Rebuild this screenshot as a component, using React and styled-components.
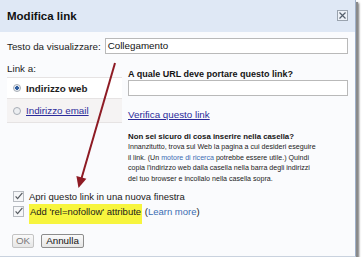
import React from "react";
import styled, { createGlobalStyle } from "styled-components";

const Global = createGlobalStyle`
  html, body {
    margin: 0;
    padding: 0;
    background: #ffffff;
  }
  body {
    font-family: "Liberation Sans", Arial, sans-serif;
    color: #1d1d1d;
  }
`;

const Dialog = styled.div`
  position: relative;
  width: 355px;
  height: 256px;
  background: #fafbfd;
  border-right: 1px solid #9fb0c9;
  border-bottom: 1px solid #c9d2de;
  box-shadow: 2px 2px 0 #8a8a8a, 3px 3px 2px rgba(0, 0, 0, 0.55);
  display: flex;
  flex-direction: column;
`;

const TitleBar = styled.div`
  height: 32px;
  flex: none;
  background: #dfe8f5;
  display: flex;
  align-items: center;
  justify-content: space-between;
  padding: 0 7px;
  box-sizing: border-box;
`;

const Title = styled.h1`
  margin: 0;
  font-size: 11.5px;
  font-weight: bold;
  color: #111;
`;

const CloseBox = styled.div`
  width: 11px;
  height: 11px;
  margin-top: -1px;
  box-sizing: border-box;
  border: 1px solid #9aa3ae;
  background: #eef2f8;
  display: flex;
  align-items: center;
  justify-content: center;
`;

const Body = styled.div`
  padding: 0 7px;
  display: flex;
  flex-direction: column;
`;

const TextRow = styled.div`
  margin-top: 6px;
  display: flex;
  align-items: center;
  gap: 4px;
`;

const Label = styled.label`
  font-size: 9.8px;
  line-height: 13px;
  color: #222;
  white-space: nowrap;
`;

const Input = styled.div`
  flex: 1;
  height: 16px;
  box-sizing: border-box;
  border: 1px solid #b9b9b9;
  background: #fff;
  font-size: 9.8px;
  line-height: 14px;
  padding-left: 2px;
  color: #111;
`;

const Columns = styled.div`
  margin-top: 8px;
  display: flex;
  gap: 6px;
  align-items: flex-start;
`;

const LeftCol = styled.div`
  width: 115px;
  flex: none;
  display: flex;
  flex-direction: column;
`;

const Panel = styled.div`
  margin-top: 2px;
  background: #f5f3f3;
  border-top: 1px solid #e6e3e3;
  border-bottom: 1px solid #e6e3e3;
  display: flex;
  flex-direction: column;
`;

const Option = styled.div`
  height: ${(p) => (p.$selected ? 20 : 23)}px;
  display: flex;
  align-items: center;
  gap: 5px;
  padding-left: 6px;
  background: ${(p) => (p.$selected ? "#ffffff" : "transparent")};
  border-bottom: ${(p) => (p.$selected ? "1px solid #e6e3e3" : "none")};
  font-size: 9.8px;
  font-weight: ${(p) => (p.$selected ? "bold" : "normal")};
`;

const Radio = styled.span`
  width: 8px;
  height: 8px;
  box-sizing: border-box;
  border-radius: 50%;
  border: 1px solid #a7adb5;
  background: ${(p) =>
    p.$on ? "radial-gradient(circle, #2f5d9e 0 1.6px, #e6ebf2 2px)" : "#eceef1"};
  flex: none;
`;

const Link = styled.a`
  color: #2b2b9a;
  text-decoration: underline;
`;

const SoftLink = styled.span`
  color: #3b6db3;
`;

const RightCol = styled.div`
  flex: 1;
  padding-top: 6px;
  display: flex;
  flex-direction: column;
`;

const Heading = styled.div`
  font-size: ${(p) => p.$size}px;
  line-height: ${(p) => p.$lh}px;
  font-weight: bold;
  color: #141414;
  margin-top: ${(p) => p.$mt || 0}px;
  white-space: nowrap;
`;

const FullInput = styled(Input)`
  flex: none;
  width: 100%;
`;

const LinkLine = styled.div`
  margin-top: 13px;
  font-size: 9.8px;
  line-height: 12px;
`;

const Help = styled.p`
  margin: 0;
  font-size: 7.1px;
  line-height: 10.5px;
  color: #222;
  white-space: nowrap;
`;

const Checks = styled.div`
  margin-top: 5px;
  display: flex;
  flex-direction: column;
`;

const CheckRow = styled.div`
  height: 15px;
  display: flex;
  align-items: center;
  gap: 4px;
  padding-left: 6px;
  font-size: 9.5px;
  color: #1a1a1a;
`;

const Highlight = styled.span`
  background: #f7f53e;
  padding: 2px 1px 7px;
`;

const Buttons = styled.div`
  margin-top: 15px;
  display: flex;
  gap: 7px;
  padding-left: 5px;
`;

const Button = styled.button`
  height: 14px;
  padding: 0 ${(p) => p.$pad}px;
  box-sizing: border-box;
  font-family: "Liberation Sans", Arial, sans-serif;
  font-size: 9.8px;
  line-height: 12px;
  color: ${(p) => (p.disabled ? "#7a7a7a" : "#111")};
  border: 1px solid ${(p) => (p.disabled ? "#c3c3c3" : "#8c8c8c")};
  border-radius: 2px;
  background: linear-gradient(#fafafa, #e6e6e6);
`;

const Overlay = styled.svg`
  position: absolute;
  left: 0;
  top: 0;
  pointer-events: none;
`;

const CheckBox = () => (
  <svg width="12" height="11" viewBox="0 0 12 11">
    <rect x="0.5" y="0.5" width="10" height="10" fill="#f6f7f9" stroke="#b7bbc1" />
    <path d="M2.6 5.4 L4.6 7.6 L9.4 1.8" fill="none" stroke="#555a60" strokeWidth="1.2" />
  </svg>
);

const App = () => {
  return (
    <>
      <Global />
      <Dialog>
        <TitleBar>
          <Title>Modifica link</Title>
          <CloseBox>
            <svg width="7" height="7" viewBox="0 0 7 7">
              <path d="M0.5 0.5 L6.5 6.5 M6.5 0.5 L0.5 6.5" stroke="#55606d" strokeWidth="1.2" />
            </svg>
          </CloseBox>
        </TitleBar>
        <Body>
          <TextRow>
            <Label>Testo da visualizzare:</Label>
            <Input>Collegamento</Input>
          </TextRow>
          <Columns>
            <LeftCol>
              <Label>Link a:</Label>
              <Panel>
                <Option $selected>
                  <Radio $on />
                  Indirizzo web
                </Option>
                <Option>
                  <Radio />
                  <Link>Indirizzo email</Link>
                </Option>
              </Panel>
            </LeftCol>
            <RightCol>
              <Heading $size={9} $lh={12}>
                A quale URL deve portare questo link?
              </Heading>
              <FullInput />
              <LinkLine>
                <Link>Verifica questo link</Link>
              </LinkLine>
              <Heading $size={7.8} $lh={11} $mt={10}>
                Non sei sicuro di cosa inserire nella casella?
              </Heading>
              <Help>
                Innanzitutto, trova sul Web la pagina a cui desideri eseguire
                <br />
                il link. (Un <SoftLink>motore di ricerca</SoftLink> potrebbe essere utile.) Quindi
                <br />
                copia l'indirizzo web dalla casella nella barra degli indirizzi
                <br />
                del tuo browser e incollalo nella casella sopra.
              </Help>
            </RightCol>
          </Columns>
          <Checks>
            <CheckRow>
              <CheckBox />
              Apri questo link in una nuova finestra
            </CheckRow>
            <CheckRow>
              <CheckBox />
              <span>
                <Highlight>Add 'rel=nofollow' attribute</Highlight> (
                <SoftLink>Learn more</SoftLink>)
              </span>
            </CheckRow>
          </Checks>
          <Buttons>
            <Button disabled $pad={3}>
              OK
            </Button>
            <Button $pad={4}>Annulla</Button>
          </Buttons>
        </Body>
        <Overlay width="355" height="256">
          <line x1="115" y1="63" x2="81.6" y2="178" stroke="#8e1b24" strokeWidth="2" />
          <polygon points="78.5,188 86.4,178.8 76.4,176" fill="#8e1b24" />
        </Overlay>
      </Dialog>
    </>
  );
};

export default App;
